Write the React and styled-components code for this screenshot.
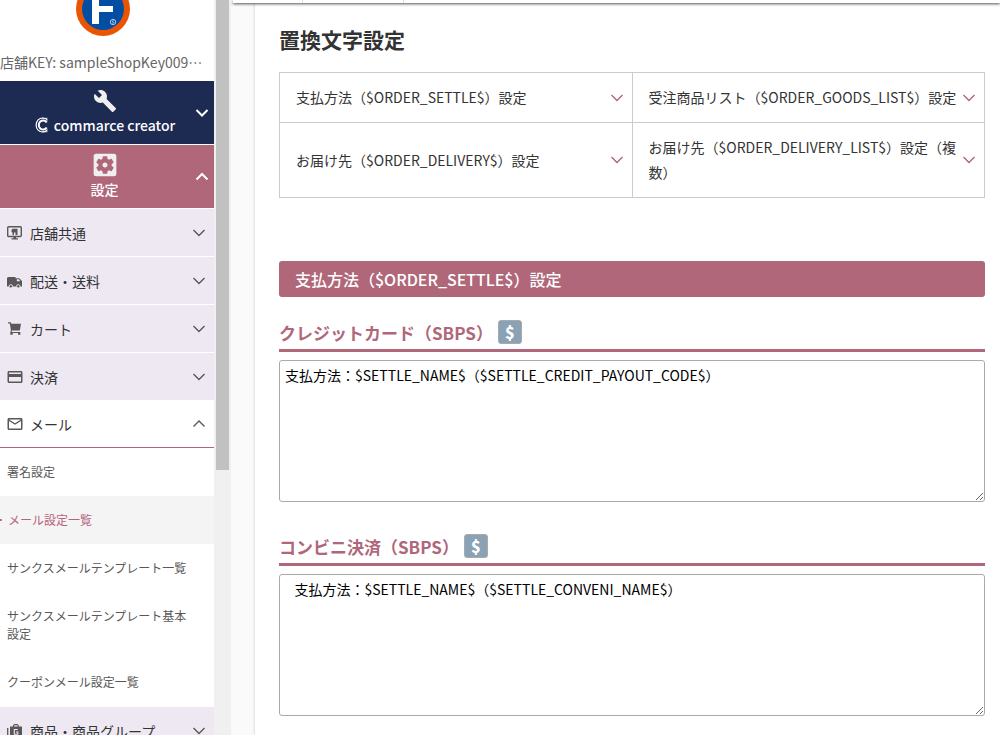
import React from "react";
import styled, { createGlobalStyle, css } from "styled-components";
import {
  MdBuild,
  MdSettingsApplications,
  MdPayment,
  MdMailOutline,
} from "react-icons/md";

const rose = "#b0677a";
const font = '"Noto Sans CJK JP", "Noto Sans", sans-serif';

const GlobalStyle = createGlobalStyle`
  *, *::before, *::after { box-sizing: border-box; }
  html, body { margin: 0; height: 100%; overflow: hidden; }
  #root { height: 100%; }
  body { font-family: ${font}; font-size: 14px; color: #333; background: #fafafa; }
  button, textarea { font-family: inherit; }
  h1, h2, h3, ul, p { margin: 0; padding: 0; }
  ul { list-style: none; }
  a { color: inherit; text-decoration: none; }
`;

const Page = styled.div`
  display: flex;
  height: 100%;
`;

const Sidebar = styled.aside`
  display: flex;
  flex: 0 0 231px;
  overflow: hidden;
  background: #fff;
`;

const SidebarBody = styled.div`
  flex: 1;
  min-width: 0;
`;

const ScrollTrack = styled.div`
  flex: 0 0 17px;
  padding: 0 2px;
  background: #f0f0f0;
`;

const ScrollThumb = styled.div`
  height: 64%;
  background: #c1c1c1;
`;

const Shop = styled.div`
  display: flex;
  flex-direction: column;
  justify-content: flex-end;
  align-items: center;
  gap: 14px;
  height: 81px;
  padding: 0 8px 7px 0;
  svg { flex: none; }
`;

const ShopKey = styled.p`
  align-self: flex-start;
  line-height: 24px;
  color: #666;
  white-space: nowrap;
`;

const MainItem = styled.button`
  display: flex;
  align-items: center;
  width: 100%;
  height: 64px;
  padding: 0 5px 0 14px;
  border: 0;
  border-bottom: 1px solid #fff;
  background: ${(p) => (p.$active ? rose : "#1d2b53")};
  color: #fff;
  font-size: 14px;
  font-weight: 500;
`;

const MainLabel = styled.span`
  display: flex;
  flex: 1;
  flex-direction: column;
  align-items: center;
  line-height: 24px;
  svg { flex: none; }
`;

const Brand = styled.span`
  display: flex;
  align-items: center;
  gap: 5px;
  white-space: nowrap;
`;

const GroupItem = styled.button`
  display: flex;
  align-items: center;
  gap: 6px;
  width: 100%;
  height: 48px;
  padding: 0 8px 0 6px;
  border: 0;
  border-bottom: 1px solid #fff;
  background: #eee8f2;
  color: #333;
  font-size: 14px;
  text-align: left;
  svg { flex: none; color: #595757; }
  ${(p) =>
    p.$open &&
    css`
      height: 47px;
      background: #fff;
      border-color: ${rose};
    `}
`;

const GroupLabel = styled.span`
  flex: 1;
  white-space: nowrap;
`;

const SubList = styled.ul`
  && { padding-bottom: 1px; }
`;

const SubLink = styled.a`
  display: flex;
  align-items: center;
  min-height: 48px;
  padding: 15px 24px 15px 7px;
  font-size: 12px;
  line-height: 18px;
  color: ${(p) => (p.$current ? "#b76280" : "#595757")};
  background: ${(p) => (p.$current ? "#f4f4f4" : "#fff")};
`;

const CurrentDot = styled.span`
  flex: none;
  width: 4px;
  height: 2px;
  margin: 0 6px 0 -9px;
  border-radius: 1px;
  background: #b76280;
`;

const Main = styled.main`
  display: flex;
  flex: 1;
  flex-direction: column;
  min-width: 0;
`;

const TopBar = styled.header`
  z-index: 1;
  display: flex;
  flex: none;
  height: 3px;
  margin-left: 2px;
  background: #fff;
  box-shadow: 0 1px 3px rgba(0, 0, 0, 0.7);
`;

const TopBarCell = styled.span`
  width: ${(p) => p.$width};
  border-right: 1px solid #ddd;
`;

const Panel = styled.div`
  flex: 1;
  margin-left: 24px;
  padding: 22px 15px 0 24px;
  background: #fff;
  box-shadow: 0 0 3px rgba(0, 0, 0, 0.2);
`;

const Title = styled.h1`
  font-size: 21px;
  line-height: 28px;
`;

const AnchorGrid = styled.nav`
  display: grid;
  grid-template-columns: 1fr 1fr;
  margin-top: 19px;
  border-top: 1px solid #ccc;
  border-left: 1px solid #ccc;
`;

const AnchorLink = styled.a`
  display: flex;
  align-items: center;
  padding: 12px 8px 12px 16px;
  border-right: 1px solid #ccc;
  border-bottom: 1px solid #ccc;
  line-height: 25px;
  word-break: break-all;
  span { flex: 1; }
  svg { flex: none; color: ${rose}; }
`;

const Banner = styled.h2`
  margin-top: 63px;
  padding: 0 16px;
  border-radius: 3px;
  background: ${rose};
  color: #fff;
  font-size: 16px;
  font-weight: 500;
  line-height: 36px;
`;

const Field = styled.section`
  margin-top: ${(p) => (p.$first ? "23px" : "32px")};
`;

const FieldHead = styled.div`
  display: flex;
  align-items: flex-start;
  gap: 5px;
  height: 32px;
  border-bottom: 3px solid ${rose};
`;

const FieldLabel = styled.label`
  color: ${rose};
  font-size: 17px;
  font-weight: 700;
  line-height: 26px;
`;

const TokenButton = styled.button`
  width: 24px;
  height: 24px;
  padding: 0;
  border: 1px solid #aaa;
  border-radius: 3px;
  background: #8aa2b5;
  color: #fff;
  font-size: 16px;
  font-weight: 900;
  line-height: 20px;
`;

const TextArea = styled.textarea`
  display: block;
  width: 100%;
  height: 142px;
  margin-top: 8px;
  padding: 4px 5px;
  border: 1px solid #aaa;
  border-radius: 3px;
  background: #fff;
  color: #000;
  font-size: 14px;
  line-height: 20px;
  resize: both;
`;

const Chevron = ({ up, bold }) => (
  <svg width="14" height="14" viewBox="0 0 14 14" fill="none" stroke="currentColor" strokeWidth={bold ? 2 : 1.4} aria-hidden="true">
    <path d={up ? "M1.5 9.500 7 4 12.5 9.500" : "M1.5 4 7 9.500 12.5 4"} />
  </svg>
);

const ShopLogo = () => (
  <svg width="54" height="54" viewBox="0 0 54 54" aria-hidden="true">
    <circle cx="27" cy="27" r="27" fill="#ea5504" />
    <circle cx="27" cy="27" r="21" fill="#034ea2" />
    <path d="M16 12h21v6H23v6h14v6H23v12h-7z" fill="#fff" />
    <circle cx="37" cy="40" r="2.7" fill="none" stroke="#cfe0f0" strokeWidth="0.8" />
    <path d="M38 38.9c-1.6-.8-2.5.6-1 1.1s.7 1.900-1.100 1" fill="none" stroke="#cfe0f0" strokeWidth="0.7" />
  </svg>
);

const CreatorLogo = () => (
  <svg width="15" height="16" viewBox="0 0 15 16" fill="none" stroke="currentColor" aria-hidden="true">
    <path d="M13.500 3.400A6.500 7 0 1 0 13.500 12.600" strokeWidth="1.200" />
    <path d="M12.700 5.500A4.300 4.600 0 1 0 12.700 10.500" strokeWidth="2" />
    <path d="M8 1.300h5.500M8 14.700h5.500" strokeWidth="0.800" />
  </svg>
);

const StoreIcon = () => (
  <svg width="18" height="18" viewBox="0 0 18 18" aria-hidden="true">
    <rect x="1.700" y="2.700" width="13.600" height="9.800" rx="1" fill="none" stroke="currentColor" strokeWidth="1.400" />
    <path d="M5.500 6l1-1.200h5v6.200h-2V8.500h-1.500V11H6.500V8.200h-1zM7.500 12.500h2.500v1.700h2v1.300h-6.500v-1.300h2z" fill="currentColor" />
  </svg>
);

const TruckIcon = () => (
  <svg width="18" height="18" viewBox="0 0 18 18" aria-hidden="true">
    <path d="M2 5h7.500v1.200h3.700L16 9v5.500H1V6z" fill="currentColor" />
    <path d="M10.800 7.300h2l1.500 2h-3.500z" fill="#eee8f2" />
    <circle cx="4.800" cy="14.300" r="1.700" fill="currentColor" stroke="#eee8f2" strokeWidth="0.900" />
    <circle cx="12.300" cy="14.300" r="1.700" fill="currentColor" stroke="#eee8f2" strokeWidth="0.900" />
  </svg>
);

const CartIcon = () => (
  <svg width="18" height="18" viewBox="0 0 18 18" fill="currentColor" aria-hidden="true">
    <path d="M2 2.300h2.800l.5 1.400h9.700L13.800 10.500H6l-.4 1.400h8.700v1.100H4.200l.7-2.700L3.800 3.500H2zM4.300 12.400h2.400v2.400H4.300zM12 12.400h2.400v2.400H12z" />
  </svg>
);

const GoodsIcon = () => (
  <svg width="18" height="18" viewBox="0 0 18 18" aria-hidden="true">
    <path d="M4 4.500h3V3.200L8.200 2h3.300l1.200 1.200v1.300h3.300V15H4zM8.200 4.500h3.300V3.200H8.200z" fill="currentColor" fillRule="evenodd" />
    <path d="M1.700 6v10.500H14" fill="none" stroke="currentColor" strokeWidth="1.300" />
    <path d="M11.800 7.500H8.300v4.800h3.500V10H10" fill="none" stroke="#eee8f2" strokeWidth="1.100" />
  </svg>
);

const groupsBefore = [
  { label: "店舗共通", icon: <StoreIcon /> },
  { label: "配送・送料", icon: <TruckIcon /> },
  { label: "カート", icon: <CartIcon /> },
  { label: "決済", icon: <MdPayment size={18} /> },
];

const mailLinks = [
  "署名設定",
  "メール設定一覧",
  "サンクスメールテンプレート一覧",
  "サンクスメールテンプレート基本設定",
  "クーポンメール設定一覧",
];

const anchors = [
  "支払方法（$ORDER_SETTLE$）設定",
  "受注商品リスト（$ORDER_GOODS_LIST$）設定",
  "お届け先（$ORDER_DELIVERY$）設定",
  "お届け先（$ORDER_DELIVERY_LIST$）設定（複数）",
];

const fields = [
  { id: "credit", label: "クレジットカード（SBPS）", value: "支払方法：$SETTLE_NAME$（$SETTLE_CREDIT_PAYOUT_CODE$）" },
  { id: "conveni", label: "コンビニ決済（SBPS）", value: "   支払方法：$SETTLE_NAME$（$SETTLE_CONVENI_NAME$）" },
];

const Group = ({ label, icon, open }) => (
  <GroupItem type="button" $open={open} aria-expanded={!!open}>
    {icon}
    <GroupLabel>{label}</GroupLabel>
    <Chevron up={open} />
  </GroupItem>
);

export default function App() {
  return (
    <>
      <GlobalStyle />
      <Page lang="ja">
        <Sidebar>
          <SidebarBody>
            <Shop>
              <ShopLogo />
              <ShopKey>店舗KEY: sampleShopKey009⋯</ShopKey>
            </Shop>
            <MainItem type="button">
              <MainLabel>
                <MdBuild size={24} color="#efefef" />
                <Brand>
                  <CreatorLogo />
                  commarce creator
                </Brand>
              </MainLabel>
              <Chevron bold />
            </MainItem>
            <MainItem type="button" $active>
              <MainLabel>
                <MdSettingsApplications size={24} viewBox="2.5 2.5 19 19" color="#efefef" />
                設定
              </MainLabel>
              <Chevron bold up />
            </MainItem>
            {groupsBefore.map((g) => (
              <Group key={g.label} {...g} />
            ))}
            <Group label="メール" icon={<MdMailOutline size={18} />} open />
            <SubList>
              {mailLinks.map((label, i) => (
                <li key={label}>
                  <SubLink href="#" $current={i === 1}>
                    {i === 1 && <CurrentDot />}
                    {label}
                  </SubLink>
                </li>
              ))}
            </SubList>
            <Group label="商品・商品グループ" icon={<GoodsIcon />} />
          </SidebarBody>
          <ScrollTrack>
            <ScrollThumb />
          </ScrollTrack>
        </Sidebar>
        <Main>
          <TopBar>
            <TopBarCell $width="70px" />
            <TopBarCell $width="101px" />
          </TopBar>
          <Panel>
            <Title>置換文字設定</Title>
            <AnchorGrid>
              {anchors.map((label) => (
                <AnchorLink key={label} href="#">
                  <span>{label}</span>
                  <Chevron />
                </AnchorLink>
              ))}
            </AnchorGrid>
            <Banner>支払方法（$ORDER_SETTLE$）設定</Banner>
            {fields.map((f, i) => (
              <Field key={f.id} $first={i === 0}>
                <FieldHead>
                  <FieldLabel htmlFor={f.id}>{f.label}</FieldLabel>
                  <TokenButton type="button">$</TokenButton>
                </FieldHead>
                <TextArea id={f.id} defaultValue={f.value} />
              </Field>
            ))}
          </Panel>
        </Main>
      </Page>
    </>
  );
}
